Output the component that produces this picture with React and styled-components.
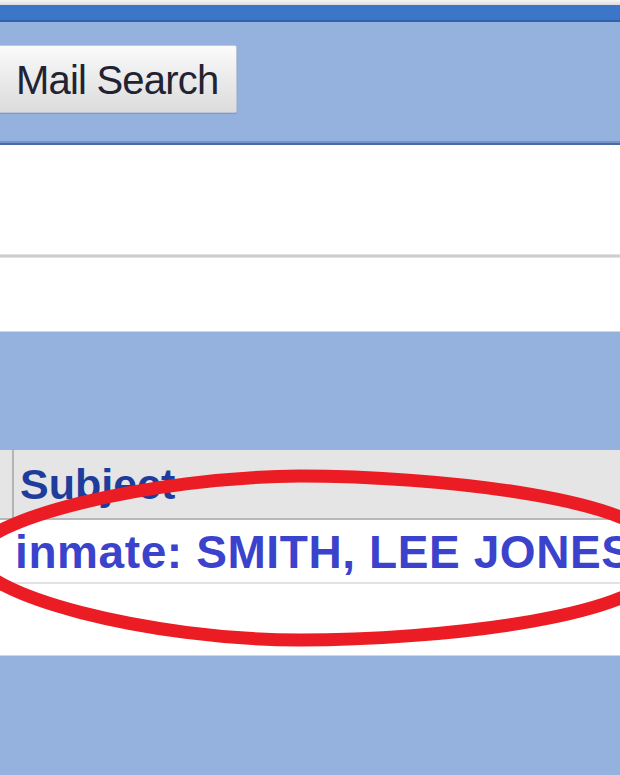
import React from "react";
import styled, { createGlobalStyle } from "styled-components";

const GlobalStyle = createGlobalStyle`
  html, body {
    margin: 0;
    padding: 0;
    background: #ffffff;
  }
  body {
    font-family: "Liberation Sans", Arial, sans-serif;
  }
`;

const Page = styled.div`
  position: relative;
  width: 620px;
  height: 775px;
  overflow: hidden;
  display: flex;
  flex-direction: column;
  background: #ffffff;
`;

const TopStrip = styled.div`
  height: 5px;
  background: linear-gradient(#f6f6f6, #dcdcdc);
`;

const TitleBar = styled.div`
  height: 15px;
  background: #3c76c8;
  border-bottom: 2px solid #2f62ad;
`;

const Toolbar = styled.div`
  height: 119px;
  background: #95b2de;
  display: flex;
  align-items: flex-start;
  padding-top: 23px;
  box-sizing: border-box;
`;

const Rule = styled.div`
  height: ${({ $h }) => $h}px;
  background: ${({ $bg }) => $bg};
`;

const SearchButton = styled.button`
  margin-left: -8px;
  height: 68px;
  padding: 2px 18px 0 23px;
  border: 1px solid #bcc6d6;
  border-radius: 2px;
  background: linear-gradient(#fbfbfb, #e9e9e9 55%, #dcdcdc);
  font-family: "Liberation Sans", Arial, sans-serif;
  font-size: 40px;
  letter-spacing: -0.8px;
  line-height: 64px;
  color: #222233;
  box-shadow: 0 1px 1px rgba(60, 80, 120, 0.25);
`;

const Blank = styled.div`
  height: ${({ $h }) => $h}px;
  background: #ffffff;
`;

const Band = styled.div`
  height: ${({ $h }) => $h}px;
  background: #95b2de;
  border-top: 1px solid #c9d7ef;
  flex: ${({ $grow }) => ($grow ? 1 : "none")};
`;

const HeaderRow = styled.div`
  display: flex;
  height: 68px;
  background: #e5e5e5;
  border-bottom: 2px solid #b8b8b8;
`;

const SelectCell = styled.div`
  width: 12px;
  border-right: 2px solid #b4b4b4;
`;

const HeaderCell = styled.div`
  padding-left: 6px;
  font-size: 43px;
  font-weight: bold;
  line-height: 68px;
  color: #1e3c9c;
  white-space: nowrap;
`;

const MailRow = styled.div`
  height: 60px;
  padding: 2px 0 0 15px;
  background: #ffffff;
  border-bottom: 2px solid #e2e2e2;
  white-space: nowrap;
`;

const SubjectLink = styled.span`
  font-size: 46px;
  font-weight: bold;
  line-height: 60px;
  letter-spacing: 0.6px;
  color: #3b43cc;
`;

const Annotation = styled.svg`
  position: absolute;
  left: 0;
  top: 0;
  pointer-events: none;
`;

export default function App() {
  return (
    <>
      <GlobalStyle />
      <Page>
        <TopStrip />
        <TitleBar />
        <Toolbar>
          <SearchButton>Mail Search</SearchButton>
        </Toolbar>
        <Rule $h={2} $bg="#7495c9" />
        <Rule $h={2} $bg="#4a6ba3" />
        <Blank $h={109} />
        <Rule $h={1} $bg="#e2e2e2" />
        <Rule $h={2} $bg="#cdcdcd" />
        <Rule $h={1} $bg="#e2e2e2" />
        <Blank $h={73} />
        <Band $h={118} />
        <HeaderRow>
          <SelectCell />
          <HeaderCell>Subject</HeaderCell>
        </HeaderRow>
        <MailRow>
          <SubjectLink>inmate: SMITH, LEE JONES</SubjectLink>
        </MailRow>
        <Blank $h={71} />
        <Band $grow />
        <Annotation width="620" height="775" viewBox="0 0 620 775">
          <path
            d="M -25 556 C -25 520, 150 477, 300 476 C 430 476, 665 498, 665 557 C 665 618, 430 640, 300 640 C 150 640, -25 595, -25 556 Z"
            fill="none"
            stroke="#ec1c24"
            strokeWidth="13"
          />
        </Annotation>
      </Page>
    </>
  );
}
